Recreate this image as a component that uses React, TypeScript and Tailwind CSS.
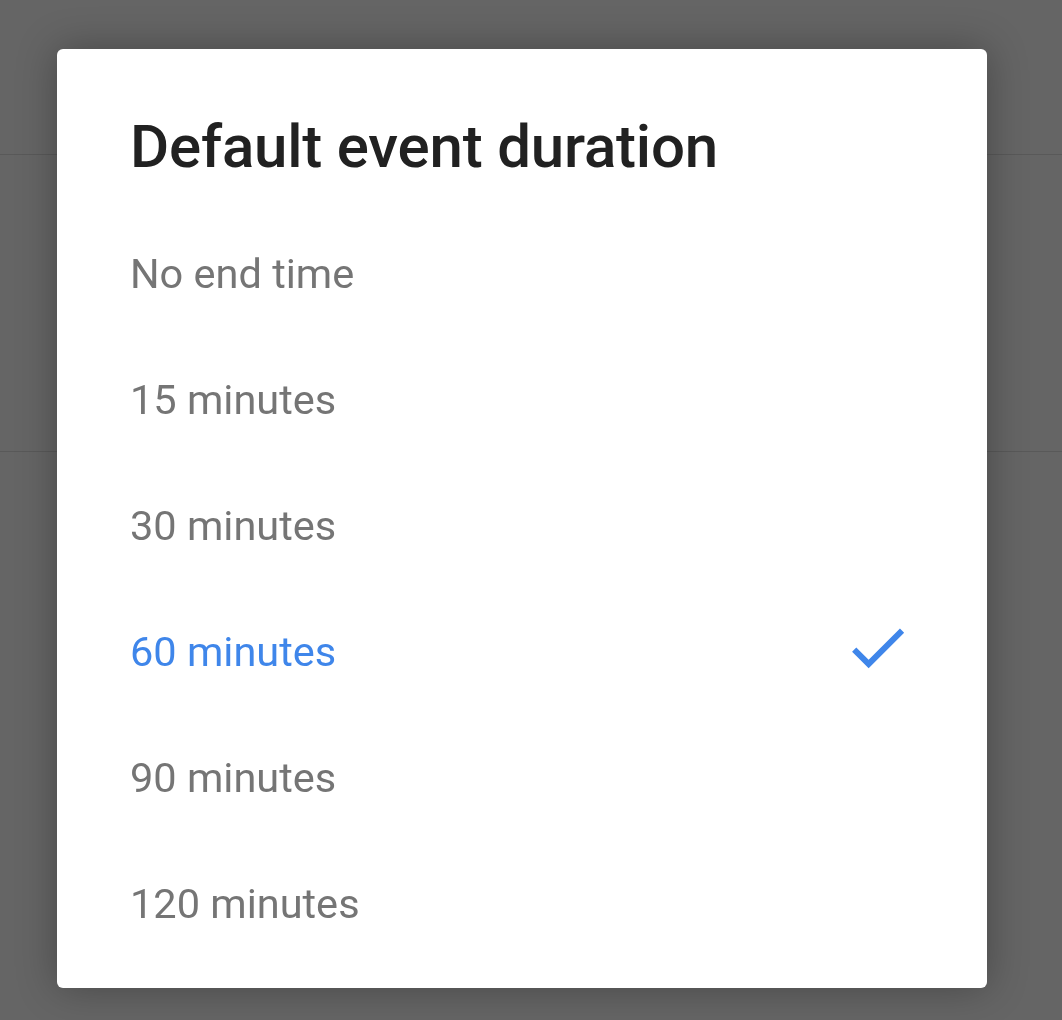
const options = ["No end time", "15 minutes", "30 minutes", "60 minutes", "90 minutes", "120 minutes"];
const selected = "60 minutes";

function CheckIcon() {
    return (
        <svg viewBox="0 0 24 24" className="w-[71px] h-[71px] shrink-0 mb-[10px]" fill="#3f86ea">
            <path d="M9 16.17L4.83 12l-1.42 1.41L9 19 21 7l-1.41-1.41z" />
        </svg>
    );
}

export default function App() {
    return (
        <div className="w-[1062px] h-[1020px] bg-[#656565] overflow-hidden font-['Roboto',sans-serif]">
            {/* page behind the dialog */}
            <div className="h-[155px] border-b border-[#595959]" />
            <div className="h-[297px] border-b border-[#595959]" />

            <div className="fixed inset-0 flex items-start">
                <div className="ml-[57px] mt-[49px] w-[930px] h-[939px] bg-white rounded-[6px] shadow-[0_0_40px_rgba(0,0,0,0.3)] pl-[73px] pr-[74px] pt-[68px]">
                    <h2 className="text-[60px] leading-[60px] font-medium text-[#212121] tracking-[-0.2px]">
                        Default event duration
                    </h2>
                    <ul className="mt-[34px]">
                        {options.map((opt) => (
                            <li
                                key={opt}
                                className={
                                    "h-[126px] flex items-center justify-between text-[41.5px] leading-[126px] " +
                                    (opt === selected ? "text-[#3f86ea]" : "text-[#757575]")
                                }
                            >
                                <span>{opt}</span>
                                {opt === selected && <CheckIcon />}
                            </li>
                        ))}
                    </ul>
                </div>
            </div>
        </div>
    );
}
